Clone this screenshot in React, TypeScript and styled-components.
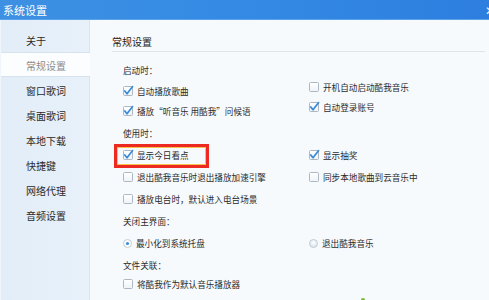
import React from 'react';
import styled, { createGlobalStyle } from 'styled-components';

const GlobalStyle = createGlobalStyle`
  html, body {
    margin: 0;
    padding: 0;
    overflow: hidden;
    background: #f7fafd;
  }
  body {
    font-family: "Noto Sans CJK SC", "Microsoft YaHei", sans-serif;
  }
`;

const Window = styled.div`
  width: 489px;
  height: 300px;
  display: flex;
  flex-direction: column;
  overflow: hidden;
  position: relative;
`;

const TitleBar = styled.div`
  height: 19px;
  flex: none;
  display: flex;
  align-items: center;
  justify-content: space-between;
  padding-left: 3px;
  background: linear-gradient(to right, #3d90e2, #348ae4 50%, #2d7edf);
  border-bottom: 1px solid #5aa2ea;
  color: #fff;
  font-size: 11px;
`;

const Close = styled.span`
  font-size: 12px;
  margin-right: -6px;
  line-height: 1;
  color: #e8f2fd;
`;

const Body = styled.div`
  flex: 1;
  display: flex;
  min-height: 0;
`;

const Sidebar = styled.nav`
  width: 88px;
  flex: none;
  padding-top: 7px;
  background: linear-gradient(to right, #e2edf8, #e8f1fa);
  border-left: 1px solid #f1f6fc;
  border-right: 1px solid #d9e5f0;
  position: relative;
`;

const NavItem = styled.div<{ $active?: boolean }>`
  height: 25px;
  line-height: 25px;
  padding-left: 25px;
  font-size: 10px;
  box-sizing: border-box;
  color: ${({ $active }) => ($active ? '#8c8c8c' : '#2a2a2a')};
  background: ${({ $active }) => ($active ? '#fbfdff' : 'transparent')};
  border-top: 1px solid ${({ $active }) => ($active ? '#d6e2ec' : 'transparent')};
  border-bottom: 1px solid ${({ $active }) => ($active ? '#d6e2ec' : 'transparent')};
  margin-right: ${({ $active }) => ($active ? '-1px' : '0')};
`;

const Content = styled.main`
  flex: 1;
  padding: 14px 4px 0 22px;
  background: #f7fafd;
  position: relative;
`;

const Heading = styled.h2`
  margin: 0;
  font-size: 10px;
  font-weight: normal;
  line-height: 16px;
  color: #222;
  padding-bottom: 1px;
  border-bottom: 1px solid #e0e4e9;
`;

const Section = styled.section<{ $mt: number }>`
  margin-top: ${({ $mt }) => $mt}px;
  padding-left: 11px;
`;

const GroupLabel = styled.div`
  height: 22px;
  line-height: 22px;
  font-size: 8.6px;
  color: #2a2a2a;
`;

const Options = styled.div<{ $row: number }>`
  display: grid;
  grid-template-columns: 186px auto;
  grid-auto-rows: ${({ $row }) => $row}px;
  align-items: center;
`;

const Option = styled.label<{ $lift?: boolean }>`
  display: flex;
  align-items: center;
  gap: 4px;
  font-size: 8.6px;
  color: #2a2a2a;
  white-space: nowrap;
  position: relative;
  margin-top: ${({ $lift }) => ($lift ? '-8px' : '0')};
  grid-column: ${({ $lift }) => ($lift ? '2' : 'auto')};
`;

const Highlight = styled.span`
  position: absolute;
  left: -9px;
  top: -5px;
  width: 95px;
  height: 24px;
  box-sizing: border-box;
  border: 3px solid #ec2a22;
  box-shadow: inset 0 0 0 1px #f4c44c;
`;

const Tip = styled.span`
  position: absolute;
  left: 271px;
  bottom: -2px;
  width: 4px;
  height: 4px;
  border-radius: 50%;
  background: #6fbf2a;
`;

const Check = ({ on }: { on?: boolean }) => (
  <svg width="10" height="10" viewBox="0 0 10 10" style={{ overflow: 'visible', flex: 'none' }}>
    <defs>
      <linearGradient id="cbg" x1="0" y1="0" x2="0" y2="1">
        <stop offset="0" stopColor="#ffffff" />
        <stop offset="1" stopColor="#eef3f8" />
      </linearGradient>
    </defs>
    <rect x="0.5" y="0.5" width="9" height="9" rx="1" fill="url(#cbg)" stroke="#aeb8c3" />
    {on && (
      <path d="M1.8 5 L4 7.8 L9.6 0.6" fill="none" stroke="#3a8ad8" strokeWidth="1.7" strokeLinecap="round" strokeLinejoin="round" />
    )}
  </svg>
);

const Radio = ({ on }: { on?: boolean }) => (
  <svg width="9" height="9" viewBox="0 0 9 9" style={{ flex: 'none' }}>
    <defs>
      <radialGradient id="rbg" cx="0.5" cy="0.4" r="0.6">
        <stop offset="0" stopColor="#ffffff" />
        <stop offset="1" stopColor="#d5e2ee" />
      </radialGradient>
    </defs>
    <circle cx="4.5" cy="4.5" r="4" fill={on ? '#fff' : 'url(#rbg)'} stroke="#c3ccd6" />
    {on && <circle cx="4.5" cy="4.5" r="1.6" fill="#3a8ee2" />}
  </svg>
);

const navItems = ['关于', '常规设置', '窗口歌词', '桌面歌词', '本地下载', '快捷键', '网络代理', '音频设置'];

const App: React.FC = () => (
  <>
    <GlobalStyle />
    <Window>
      <TitleBar>
        <span>系统设置</span>
        <Close>✕</Close>
      </TitleBar>
      <Body>
        <Sidebar>
          {navItems.map((item) => (
            <NavItem key={item} $active={item === '常规设置'}>
              {item}
            </NavItem>
          ))}
        </Sidebar>
        <Content>
          <Heading>常规设置</Heading>

          <Section $mt={7}>
            <GroupLabel>启动时：</GroupLabel>
            <Options $row={20}>
              <Option><Check on />自动播放歌曲</Option>
              <Option $lift><Check />开机自动启动酷我音乐</Option>
              <Option><Check on />播放“听音乐 用酷我”问候语</Option>
              <Option $lift><Check on />自动登录账号</Option>
            </Options>
          </Section>

          <Section $mt={1}>
            <GroupLabel>使用时：</GroupLabel>
            <Options $row={22}>
              <Option>
                <Highlight />
                <Check on />显示今日看点
              </Option>
              <Option><Check on />显示抽奖</Option>
              <Option><Check />退出酷我音乐时退出播放加速引擎</Option>
              <Option><Check />同步本地歌曲到云音乐中</Option>
              <Option><Check />播放电台时，默认进入电台场景</Option>
            </Options>
          </Section>

          <Section $mt={0}>
            <GroupLabel>关闭主界面：</GroupLabel>
            <Options $row={22}>
              <Option><Radio on />最小化到系统托盘</Option>
              <Option><Radio />退出酷我音乐</Option>
            </Options>
          </Section>

          <Section $mt={0}>
            <GroupLabel>文件关联：</GroupLabel>
            <Options $row={16}>
              <Option><Check />将酷我作为默认音乐播放器</Option>
            </Options>
          </Section>
          <Tip />
        </Content>
      </Body>
    </Window>
  </>
);

export default App;
